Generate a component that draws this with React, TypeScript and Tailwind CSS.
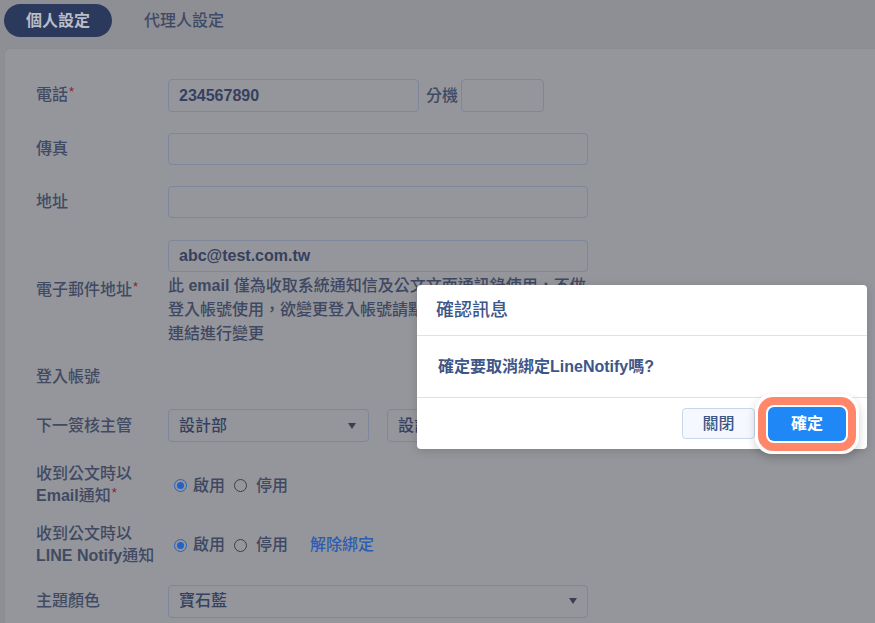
import React from "react";

const Req = () => (
  <span className="text-[#8b1d2c] text-[13px] relative -top-[4px] ml-[1px]">*</span>
);

const Radio = ({ on }: { on: boolean }) =>
  on ? (
    <span className="w-[13px] h-[13px] rounded-full border border-[#2562c7] flex items-center justify-center shrink-0">
      <span className="block w-[7px] h-[7px] rounded-full bg-[#2562c7]" />
    </span>
  ) : (
    <span className="block w-[13px] h-[13px] rounded-full border border-[#3e3f47] shrink-0" />
  );

const Arrow = () => (
  <svg width="8" height="6" viewBox="0 0 8 6" className="shrink-0">
    <path d="M0 0 L8 0 L4 6 Z" fill="#3a3f55" />
  </svg>
);

const Label = ({ children }: { children: React.ReactNode }) => (
  <div className="w-[132px] shrink-0 text-[16px] leading-[22px] text-[#414a63] font-medium">{children}</div>
);

const Box = ({ className, children }: { className: string; children?: React.ReactNode }) => (
  <div className={"border border-[#7d869b] rounded-[4px] flex items-center " + className}>{children}</div>
);

const RadioGroup = ({ link }: { link?: boolean }) => (
  <div className="flex items-center text-[16px] text-[#3f4862] font-medium ml-[6px]">
    <Radio on />
    <span className="ml-[6px]">啟用</span>
    <span className="ml-[9px] flex items-center">
      <Radio on={false} />
    </span>
    <span className="ml-[9px]">停用</span>
    {link && <span className="ml-[22px] text-[#2b5cb0] font-medium">解除綁定</span>}
  </div>
);

export default function App() {
  return (
    <div className="w-[875px] h-[623px] overflow-hidden relative bg-[#8e8f94] font-['Liberation_Sans','Noto_Sans_CJK_TC',sans-serif] flex flex-col">
      <div className="h-[48px] shrink-0 flex items-start pt-[4px] pl-[4px]">
        <div className="h-[33px] w-[108px] rounded-full bg-[#2b3a5c] text-[#b9bdc7] font-bold text-[16px] flex items-center justify-center">
          個人設定
        </div>
        <div className="h-[33px] ml-[32px] flex items-center text-[16px] text-[#3f4a66] font-medium">代理人設定</div>
      </div>

      <div className="flex-1 ml-[4px] bg-[#95969b] border-l border-t border-[#8b8c91] rounded-tl-[6px] pt-[30px] pl-[31px]">
        {/* 電話 */}
        <div className="flex items-center h-[33px] mb-[21px]">
          <Label>
            電話<Req />
          </Label>
          <Box className="w-[251px] h-[33px] pl-[10px] text-[16px] font-bold text-[#35415f]">234567890</Box>
          <span className="ml-[7px] text-[16px] text-[#414a63] font-medium">分機</span>
          <Box className="ml-[3px] w-[83px] h-[33px]" />
        </div>
        {/* 傳真 */}
        <div className="flex items-center h-[32px] mb-[21px]">
          <Label>傳真</Label>
          <Box className="w-[420px] h-[32px]" />
        </div>
        {/* 地址 */}
        <div className="flex items-center h-[32px] mb-[22px]">
          <Label>地址</Label>
          <Box className="w-[420px] h-[32px]" />
        </div>
        {/* email */}
        <div className="flex items-start">
          <div className="pt-[39px]">
            <Label>
              電子郵件地址<Req />
            </Label>
          </div>
          <div className="w-[420px]">
            <Box className="w-[420px] h-[32px] pl-[10px] text-[16px] font-bold text-[#35415f]">abc@test.com.tw</Box>
            <div className="mt-[2px] text-[16px] leading-[24px] text-[#3f4862] font-medium whitespace-nowrap">
              <div>
                此 <span className="font-bold">email</span> 僅為收取系統通知信及公文文面通訊錄使用，不做
              </div>
              <div>登入帳號使用，欲變更登入帳號請點選帳號管理</div>
              <div>連結進行變更</div>
            </div>
          </div>
        </div>
        {/* 登入帳號 */}
        <div className="flex items-center h-[32px] mt-[15px] mb-[17px]">
          <Label>登入帳號</Label>
        </div>
        {/* 下一簽核主管 */}
        <div className="flex items-center h-[33px] -mt-[1px]">
          <Label>下一簽核主管</Label>
          <Box className="w-[201px] h-[33px] pl-[10px] pr-[12px] justify-between text-[16px] text-[#35415f] font-medium">
            <span>設計部</span>
            <Arrow />
          </Box>
          <Box className="ml-[18px] w-[201px] h-[33px] pl-[10px] pr-[12px] justify-between text-[16px] text-[#35415f] font-medium">
            <span>設計師</span>
            <Arrow />
          </Box>
        </div>
        {/* Email 通知 */}
        <div className="flex items-center mt-[21px]">
          <Label>
            收到公文時以
            <br />
            <span className="font-bold">Email</span>通知<Req />
          </Label>
          <RadioGroup />
        </div>
        {/* LINE 通知 */}
        <div className="flex items-center mt-[15px]">
          <Label>
            收到公文時以
            <br />
            <span className="font-bold">LINE Notify</span>通知
          </Label>
          <RadioGroup link />
        </div>
        {/* 主題顏色 */}
        <div className="flex items-center h-[32px] mt-[18px]">
          <Label>主題顏色</Label>
          <Box className="w-[420px] h-[33px] pl-[10px] pr-[10px] justify-between text-[16px] text-[#35415f] font-medium">
            <span>寶石藍</span>
            <Arrow />
          </Box>
        </div>
      </div>

      {/* Modal */}
      <div className="absolute left-[417px] top-[285px] w-[450px] h-[164px] bg-white rounded-[4px] shadow-[0_2px_10px_rgba(0,0,0,0.15)] flex flex-col">
        <div className="h-[51px] shrink-0 border-b border-[#d9e2f0] pl-[19px] flex items-center text-[18px] text-[#3d5688] font-medium">
          確認訊息
        </div>
        <div className="h-[62px] shrink-0 border-b border-[#d9e2f0] pl-[21px] flex items-center text-[16px] font-bold text-[#3d5688]">
          確定要取消綁定LineNotify嗎?
        </div>
        <div className="flex-1 flex items-center justify-end pr-[21px]">
          <button className="w-[73px] h-[31px] rounded-[4px] bg-[#f5f8fe] border border-[#c9d6ee] text-[16px] text-[#3d5688] font-medium">
            關閉
          </button>
          <button className="ml-[13px] w-[78px] h-[34px] rounded-[6px] bg-[#1f87f6] text-white text-[16px] font-bold shadow-[0_0_0_2px_#ffffff,0_0_0_10px_#ff8668,0_0_0_13px_#ffffff,0_4px_10px_13px_rgba(0,0,0,0.18)]">
            確定
          </button>
        </div>
      </div>
    </div>
  );
}
